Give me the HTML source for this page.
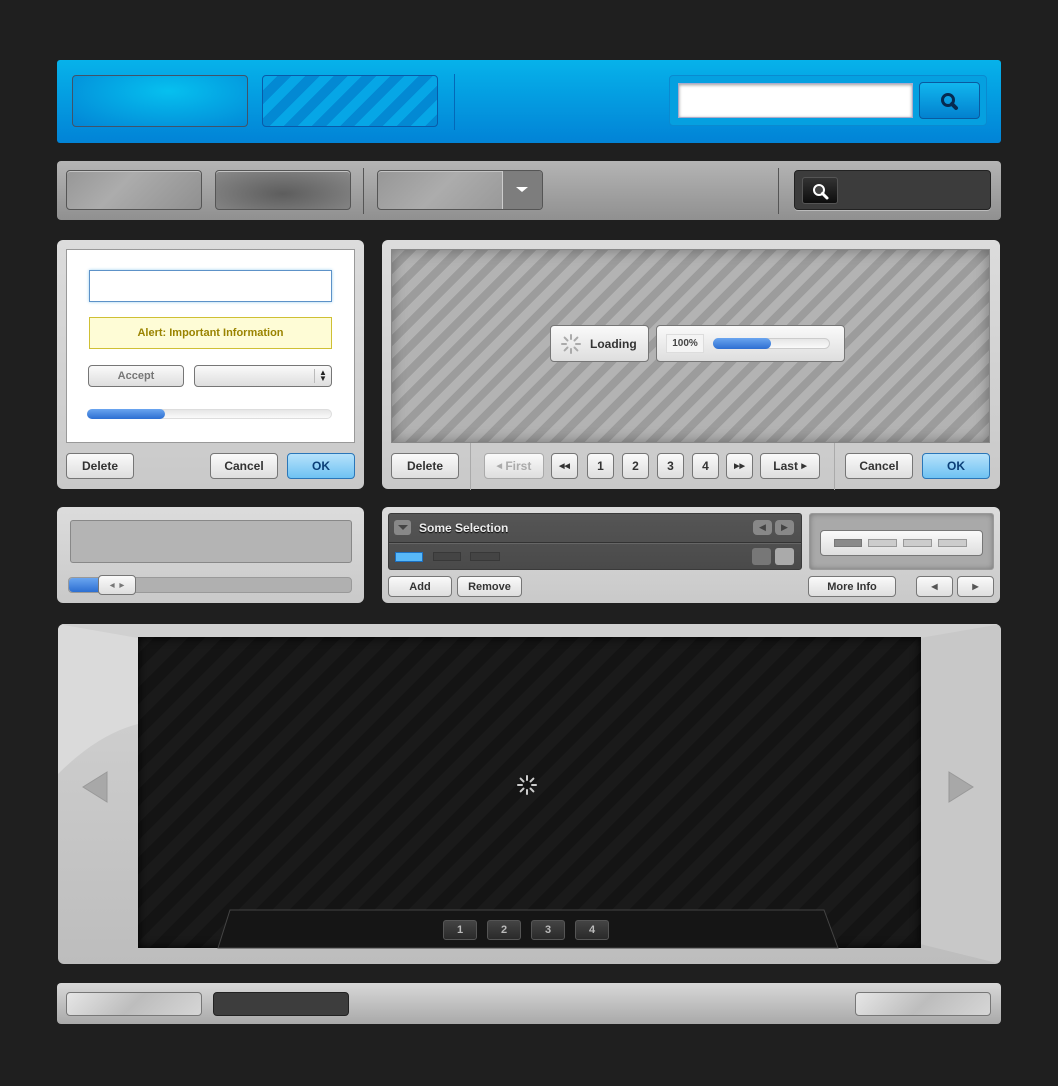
<!DOCTYPE html>
<html><head><meta charset="utf-8"><style>
*{margin:0;padding:0;box-sizing:border-box}
body{width:1058px;height:1086px;background:#1f1f1f;position:relative;overflow:hidden;font-family:"Liberation Sans",sans-serif}
div{position:absolute}
.b{background:linear-gradient(#fafafa,#dedede);border:1px solid #767676;border-radius:4px;font-size:12px;font-weight:bold;color:#333;text-align:center;display:flex;align-items:center;justify-content:center}
.ok{background:linear-gradient(#b6e2fb,#6ec2f2);border-color:#2a76b8;color:#0c3f77}
.panel{background:linear-gradient(#dcdcdc,#c9c9c9);border-radius:6px}
.gb{background:linear-gradient(135deg,#979797,#acacac 40%,#909090);border:1px solid #555;border-radius:4px;box-shadow:inset 0 1px 0 #c4c4c4}
.sm{font-size:11px}
.nb{width:34px;height:20px;background:linear-gradient(#444,#2a2a2a);border:1px solid #555;border-radius:3px;color:#bbb;font-size:11px;font-weight:bold;text-align:center;line-height:18px}
</style></head><body>
<div style="left:57px;top:60px;width:944px;height:83px;background:linear-gradient(#06b2ea,#0283d6);border-radius:3px"></div>
<div style="left:72px;top:75px;width:176px;height:52px;border:1px solid #40536a;border-radius:4px;background:radial-gradient(ellipse at 55% 30%,#06c0ef,#0285d5)"></div>
<div style="left:262px;top:75px;width:176px;height:52px;border:1px solid #0a5aa8;border-radius:4px;background:repeating-linear-gradient(135deg,#06a6e6 0 10px,#0389d3 10px 20px)"></div>
<div style="left:454px;top:74px;width:1px;height:56px;background:#0468b8"></div>
<div style="left:669px;top:75px;width:318px;height:51px;border:1px solid #0a8ad0;border-radius:4px;background:#05a0e0"></div>
<div style="left:678px;top:83px;width:235px;height:35px;background:#fff;border:1px solid #aac;box-shadow:inset 0 1px 3px #999"></div>
<div style="left:919px;top:82px;width:61px;height:37px;border:1px solid #0a5aa0;border-radius:4px;background:linear-gradient(#11b6ee,#0281cf)">
<svg width="61" height="37" viewBox="0 0 61 37"><circle cx="28" cy="17" r="5.5" fill="none" stroke="#062a50" stroke-width="3"/><path d="M32 21L36 25" stroke="#062a50" stroke-width="4" stroke-linecap="round"/></svg></div>
<div style="left:57px;top:161px;width:944px;height:59px;background:linear-gradient(#b4b4b4,#909090);border-radius:4px"></div>
<div class="gb" style="left:66px;top:170px;width:136px;height:40px"></div>
<div class="gb" style="left:215px;top:170px;width:136px;height:40px;background:radial-gradient(ellipse at 50% 60%,#5d5d5d,#8a8a8a)"></div>
<div style="left:363px;top:168px;width:1px;height:46px;background:#555"></div>
<div class="gb" style="left:377px;top:170px;width:166px;height:40px"></div>
<div style="left:502px;top:171px;width:1px;height:38px;background:#ccc"></div>
<div style="left:503px;top:171px;width:39px;height:38px;background:#7d7d7d;border-radius:0 3px 3px 0"></div>
<div style="left:516px;top:187px;width:0;height:0;border-left:6px solid transparent;border-right:6px solid transparent;border-top:5px solid #fff"></div>
<div style="left:778px;top:168px;width:1px;height:46px;background:#555"></div>
<div style="left:794px;top:170px;width:197px;height:40px;background:#3c3c3c;border:1px solid #222;border-radius:4px;box-shadow:0 1px 0 #bbb"></div>
<div style="left:802px;top:177px;width:36px;height:27px;background:linear-gradient(#333,#0d0d0d);border:1px solid #555;border-radius:3px">
<svg width="36" height="27"><circle cx="16" cy="12" r="5" fill="#444" stroke="#fff" stroke-width="2"/><path d="M19.5 15.5L24 20" stroke="#fff" stroke-width="3" stroke-linecap="round"/></svg></div>
<div class="panel" style="left:57px;top:240px;width:307px;height:249px"></div>
<div style="left:66px;top:249px;width:289px;height:194px;background:#fff;border:1px solid #999"></div>
<div style="left:89px;top:270px;width:243px;height:32px;border:1px solid #5d92c8;box-shadow:0 0 3px #9cd0f0"></div>
<div style="left:89px;top:317px;width:243px;height:32px;background:#fefcd6;border:1px solid #cfc034;color:#9a8300;font-size:11px;font-weight:bold;display:flex;align-items:center;justify-content:center">Alert: Important Information</div>
<div class="b sm" style="left:88px;top:365px;width:96px;height:22px;color:#777;font-size:11px">Accept</div>
<div class="b" style="left:194px;top:365px;width:138px;height:22px"></div>
<div style="left:314px;top:369px;width:1px;height:14px;background:#bbb"></div>
<div style="left:319px;top:370px;font-size:8px;color:#222;line-height:6px">&#9650;<br>&#9660;</div>
<div style="left:87px;top:409px;width:245px;height:10px;border-radius:5px;background:linear-gradient(#e6e6e6,#fafafa);border:1px solid #ddd"></div>
<div style="left:87px;top:409px;width:78px;height:10px;border-radius:5px;background:linear-gradient(#6aa5ef,#2d6fd2)"></div>
<div class="b" style="left:66px;top:453px;width:68px;height:26px">Delete</div>
<div class="b" style="left:210px;top:453px;width:68px;height:26px">Cancel</div>
<div class="b ok" style="left:287px;top:453px;width:68px;height:26px">OK</div>
<div class="panel" style="left:382px;top:240px;width:618px;height:249px"></div>
<div style="left:391px;top:249px;width:599px;height:194px;background:repeating-linear-gradient(135deg,#b3b3b3 0 9px,#9c9c9c 9px 17px);border:1px solid #888;box-shadow:inset 0 0 14px rgba(0,0,0,.35)"></div>
<div class="b" style="left:550px;top:325px;width:99px;height:37px;font-size:12px;justify-content:flex-start;padding-left:39px">Loading</div>
<svg style="position:absolute;left:560px;top:333px" width="22" height="22" viewBox="-11 -11 22 22"><g stroke="#aaa" stroke-width="2" stroke-linecap="round"><path d="M0-9V-5"/><path d="M6.4-6.4L3.5-3.5"/><path d="M9 0H5"/><path d="M6.4 6.4L3.5 3.5"/><path d="M0 9V5"/><path d="M-6.4 6.4L-3.5 3.5"/><path d="M-9 0H-5"/><path d="M-6.4-6.4L-3.5-3.5"/></g></svg>
<div class="b" style="left:656px;top:325px;width:189px;height:37px"></div>
<div style="left:666px;top:334px;width:38px;height:19px;background:#f4f4f4;border:1px solid #ddd;font-size:10px;font-weight:bold;color:#444;display:flex;align-items:center;justify-content:center">100%</div>
<div style="left:713px;top:338px;width:117px;height:11px;border-radius:6px;background:linear-gradient(#e6e6e6,#fafafa);border:1px solid #ccc"></div>
<div style="left:713px;top:338px;width:58px;height:11px;border-radius:6px;background:linear-gradient(#6aa5ef,#2d6fd2)"></div>
<div style="left:470px;top:443px;width:1px;height:47px;background:#aaa"></div>
<div style="left:834px;top:443px;width:1px;height:47px;background:#aaa"></div>
<div class="b" style="left:391px;top:453px;width:68px;height:26px">Delete</div>
<div class="b" style="left:484px;top:453px;width:60px;height:26px;color:#aaa;border-color:#aaa"><span style="font-size:7px">&#9664;</span>&nbsp;First</div>
<div class="b" style="left:551px;top:453px;width:27px;height:26px;font-size:7px">&#9664;&#9664;</div>
<div class="b" style="left:587px;top:453px;width:27px;height:26px">1</div>
<div class="b" style="left:622px;top:453px;width:27px;height:26px">2</div>
<div class="b" style="left:657px;top:453px;width:27px;height:26px">3</div>
<div class="b" style="left:692px;top:453px;width:27px;height:26px">4</div>
<div class="b" style="left:726px;top:453px;width:27px;height:26px;font-size:7px">&#9654;&#9654;</div>
<div class="b" style="left:760px;top:453px;width:60px;height:26px">Last&nbsp;<span style="font-size:7px">&#9654;</span></div>
<div class="b" style="left:845px;top:453px;width:68px;height:26px">Cancel</div>
<div class="b ok" style="left:922px;top:453px;width:68px;height:26px">OK</div>
<div class="panel" style="left:57px;top:507px;width:307px;height:96px"></div>
<div style="left:70px;top:520px;width:282px;height:43px;background:#b4b4b4;border:1px solid #888;border-radius:3px"></div>
<div style="left:68px;top:577px;width:284px;height:16px;background:#b0b0b0;border:1px solid #999;border-radius:4px"></div>
<div style="left:69px;top:578px;width:35px;height:14px;background:linear-gradient(#6aa5ef,#2d6fd2);border-radius:4px"></div>
<div class="b" style="left:98px;top:575px;width:38px;height:20px;font-size:6px;color:#777">&#9664;&nbsp;&nbsp;&nbsp;&#9654;</div>
<div class="panel" style="left:382px;top:507px;width:618px;height:96px"></div>
<div style="left:388px;top:513px;width:414px;height:57px;background:linear-gradient(#555,#4a4a4a);border:1px solid #3a3a3a;border-radius:3px"></div>
<div style="left:389px;top:542px;width:412px;height:1px;background:#333;box-shadow:0 1px 0 #666"></div>
<div style="left:394px;top:520px;width:17px;height:15px;background:#888;border-radius:3px"></div>
<div style="left:398px;top:525px;border-left:5px solid transparent;border-right:5px solid transparent;border-top:5px solid #444"></div>
<div style="left:419px;top:521px;font-size:12px;font-weight:bold;color:#eee;text-shadow:0 1px 1px #000">Some Selection</div>
<div style="left:753px;top:520px;width:19px;height:15px;background:#888;border-radius:4px;color:#444;font-size:9px;text-align:center;line-height:15px">&#9664;</div>
<div style="left:775px;top:520px;width:19px;height:15px;background:#888;border-radius:4px;color:#444;font-size:9px;text-align:center;line-height:15px">&#9654;</div>
<div style="left:395px;top:552px;width:28px;height:10px;background:#58b8f8;border:1px solid #1c6fc0"></div>
<div style="left:433px;top:552px;width:28px;height:9px;background:#444;border:1px solid #383838"></div>
<div style="left:470px;top:552px;width:30px;height:9px;background:#444;border:1px solid #383838"></div>
<div style="left:752px;top:548px;width:19px;height:17px;background:#777;border-radius:3px"></div>
<div style="left:775px;top:548px;width:19px;height:17px;background:#aaa;border-radius:3px"></div>
<div style="left:809px;top:513px;width:185px;height:57px;background:#a9a9a9;border:1px solid #999;border-radius:3px;box-shadow:inset 0 0 6px rgba(0,0,0,.3)"></div>
<div class="b" style="left:820px;top:530px;width:163px;height:26px"></div>
<div style="left:834px;top:539px;width:28px;height:8px;background:#8a8a8a;border:1px solid #777"></div>
<div style="left:868px;top:539px;width:29px;height:8px;background:#ccc;border:1px solid #999"></div>
<div style="left:903px;top:539px;width:29px;height:8px;background:#ccc;border:1px solid #999"></div>
<div style="left:938px;top:539px;width:29px;height:8px;background:#ccc;border:1px solid #999"></div>
<div class="b sm" style="left:388px;top:576px;width:64px;height:21px">Add</div>
<div class="b sm" style="left:457px;top:576px;width:65px;height:21px">Remove</div>
<div class="b sm" style="left:808px;top:576px;width:88px;height:21px">More Info</div>
<div class="b" style="left:916px;top:576px;width:37px;height:21px;font-size:8px;color:#555">&#9664;</div>
<div class="b" style="left:957px;top:576px;width:37px;height:21px;font-size:8px;color:#555">&#9654;</div>
<div style="left:58px;top:624px;width:943px;height:340px;background:linear-gradient(#d4d4d4,#bdbdbd);border-radius:6px;overflow:hidden">
<svg style="position:absolute;left:0;top:0" width="943" height="340"><path d="M0 150 Q40 110 80 100 L80 0 L0 0Z" fill="#dadada"/><path d="M862 0 L943 0 L943 340 L862 320Z" fill="#c8c8c8"/><path d="M0 0 L943 0 L862 14 L80 14Z" fill="#d0d0d0"/></svg></div>
<div style="left:138px;top:637px;width:783px;height:311px;background:repeating-linear-gradient(135deg,#1a1a1a 0 12px,#141414 12px 24px);box-shadow:inset 0 0 10px #000"></div>
<svg style="position:absolute;left:80px;top:770px" width="30" height="34"><path d="M27 2L3 17L27 32Z" fill="#a8a8a8" stroke="#999"/></svg>
<svg style="position:absolute;left:946px;top:770px" width="30" height="34"><path d="M3 2L27 17L3 32Z" fill="#a8a8a8" stroke="#999"/></svg>
<svg style="position:absolute;left:515px;top:773px" width="24" height="24" viewBox="-12 -12 24 24"><g stroke="#ccc" stroke-width="2" stroke-linecap="round"><path d="M0-9V-5"/><path d="M6.4-6.4L3.5-3.5"/><path d="M9 0H5"/><path d="M6.4 6.4L3.5 3.5"/><path d="M0 9V5"/><path d="M-6.4 6.4L-3.5 3.5"/><path d="M-9 0H-5"/><path d="M-6.4-6.4L-3.5-3.5"/></g></svg>
<svg style="position:absolute;left:216px;top:909px" width="624" height="40"><path d="M14 1H608L622 39H2Z" fill="#151515" stroke="#444"/></svg>
<div class="nb" style="left:443px;top:920px">1</div>
<div class="nb" style="left:487px;top:920px">2</div>
<div class="nb" style="left:531px;top:920px">3</div>
<div class="nb" style="left:575px;top:920px">4</div>
<div style="left:57px;top:983px;width:944px;height:41px;background:linear-gradient(#d8d8d8,#a9a9a9);border-radius:4px"></div>
<div style="left:66px;top:992px;width:136px;height:24px;background:linear-gradient(135deg,#e6e6e6,#bdbdbd 50%,#d6d6d6);border:1px solid #777;border-radius:4px"></div>
<div style="left:213px;top:992px;width:136px;height:24px;background:#3d3d3d;border:1px solid #222;border-radius:4px"></div>
<div style="left:855px;top:992px;width:136px;height:24px;background:linear-gradient(135deg,#e6e6e6,#bdbdbd 50%,#d6d6d6);border:1px solid #777;border-radius:4px"></div>
</body></html>
